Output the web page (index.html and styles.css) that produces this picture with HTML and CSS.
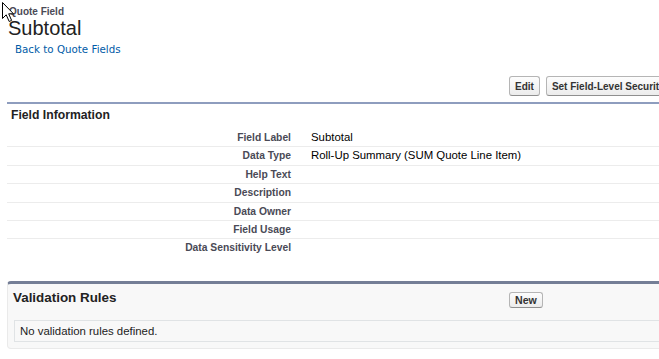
FILE: index.html
```html
<!DOCTYPE html>
<html lang="en">
<head>
  <meta charset="UTF-8" />
  <meta name="viewport" content="width=device-width, initial-scale=1.0" />
  <title>Subtotal - Quote Field</title>
  <link rel="stylesheet" href="styles.css">
</head>
<body>
  <svg class="cursor" width="14" height="22" viewBox="0 0 14 22">
    <path d="M1.5 1.5 L1.5 17.5 L5.2 13.8 L8.2 20.5 L10.6 19.4 L7.7 12.8 L12.5 12.8 Z" fill="#fff" stroke="#000" stroke-width="1" stroke-linejoin="miter" />
  </svg>

  <div class="page-head">
    <div class="page-type">Quote Field</div>
    <h1 class="page-title">Subtotal</h1>
    <div class="breadcrumb"><a href="#">Back to Quote Fields</a></div>
  </div>

  <div class="block detail">
    <div class="block-buttons">
      <div></div>
      <div class="btn-group">
        <button class="btn">Edit</button>
        <button class="btn">Set Field-Level Security</button>
      </div>
    </div>
    <div class="block-body">
      <h3 class="section-title">Field Information</h3>
      <table class="detail-list">
        <tr><td class="label">Field Label</td><td class="data">Subtotal</td></tr>
        <tr><td class="label">Data Type</td><td class="data">Roll-Up Summary (SUM Quote Line Item)</td></tr>
        <tr><td class="label">Help Text</td><td class="data"></td></tr>
        <tr><td class="label">Description</td><td class="data"></td></tr>
        <tr><td class="label">Data Owner</td><td class="data"></td></tr>
        <tr><td class="label">Field Usage</td><td class="data"></td></tr>
        <tr><td class="label">Data Sensitivity Level</td><td class="data"></td></tr>
      </table>
    </div>
  </div>

  <div class="block related">
    <div class="related-head">
      <h2 class="related-title">Validation Rules</h2>
      <div><button class="btn small">New</button></div>
    </div>
    <div class="related-body">No validation rules defined.</div>
  </div>
</body>
</html>
```

FILE: styles.css
```css
html, body {
  overflow: hidden;
}
body {
  margin: 0;
  font-family: "Liberation Sans", Arial, sans-serif;
  color: #000;
  background: #fff;
  position: relative;
}
.cursor {
  position: absolute;
  left: 1px;
  top: 1px;
}
.page-head {
  padding: 6px 0 0 8px;
}
.page-type {
  padding-left: 1px;
  font-size: 10px;
  line-height: 11px;
  font-weight: bold;
  color: #4a4a56;
}
.page-title {
  margin: 0;
  font-size: 20px;
  line-height: 22px;
  font-weight: normal;
  color: #222;
}
.breadcrumb {
  margin-top: 4px;
  padding-left: 7px;
  font-family: "DejaVu Sans", Verdana, sans-serif;
  font-size: 10.3px;
  line-height: 12px;
}
.breadcrumb a {
  color: #015ba7;
  text-decoration: none;
}
.block {
  margin-left: 7px;
  width: 760px;
}
.detail {
  margin-top: 21px;
}
.block-buttons {
  display: grid;
  grid-template-columns: 502px auto;
  padding-bottom: 6px;
}
.btn-group {
  display: flex;
  gap: 6px;
}
.btn {
  height: 20px;
  padding: 0 5px;
  font-family: "Liberation Sans", Arial, sans-serif;
  font-size: 10px;
  font-weight: bold;
  color: #333;
  background: linear-gradient(#fdfdfd, #ececec);
  border: 1px solid #b5b5b5;
  border-bottom-color: #8f8f8f;
  border-radius: 3px;
  white-space: nowrap;
}
.btn.small {
  height: 16px;
  line-height: 12px;
  font-size: 10.6px;
}
.block-body {
  border-top: 2px solid #8e9dbe;
}
.section-title {
  margin: 0;
  padding: 4px 0 7px 4px;
  font-size: 12.2px;
  line-height: 14px;
  color: #222;
}
.detail-list {
  width: 100%;
  border-collapse: collapse;
}
.detail-list td {
  padding: 3px 0;
  line-height: 11.4px;
  border-bottom: 1px solid #ececec;
}
.detail-list tr:last-child td {
  border-bottom: none;
}
.detail-list .label {
  width: 284px;
  text-align: right;
  font-size: 10.3px;
  font-weight: bold;
  color: #4a4a56;
}
.detail-list .data {
  padding-left: 20px;
  font-size: 11.4px;
  color: #000;
}
.related {
  margin-top: 24px;
  background: #f8f8f8;
  border: 1px solid #eaeaea;
  border-top: 3px solid #747e96;
  border-radius: 4px;
}
.related-head {
  display: grid;
  grid-template-columns: 496px auto;
  padding: 6px 0 12px 5px;
}
.related-title {
  margin: 0;
  font-size: 13.4px;
  line-height: 16px;
  color: #222;
}
.related-body {
  margin: 0 0 6px 6px;
  padding: 4px 5px;
  font-size: 11.4px;
  line-height: 12px;
  color: #222;
  background: #f8f8f8;
  border: 1px solid #e0e3e5;
}
```
